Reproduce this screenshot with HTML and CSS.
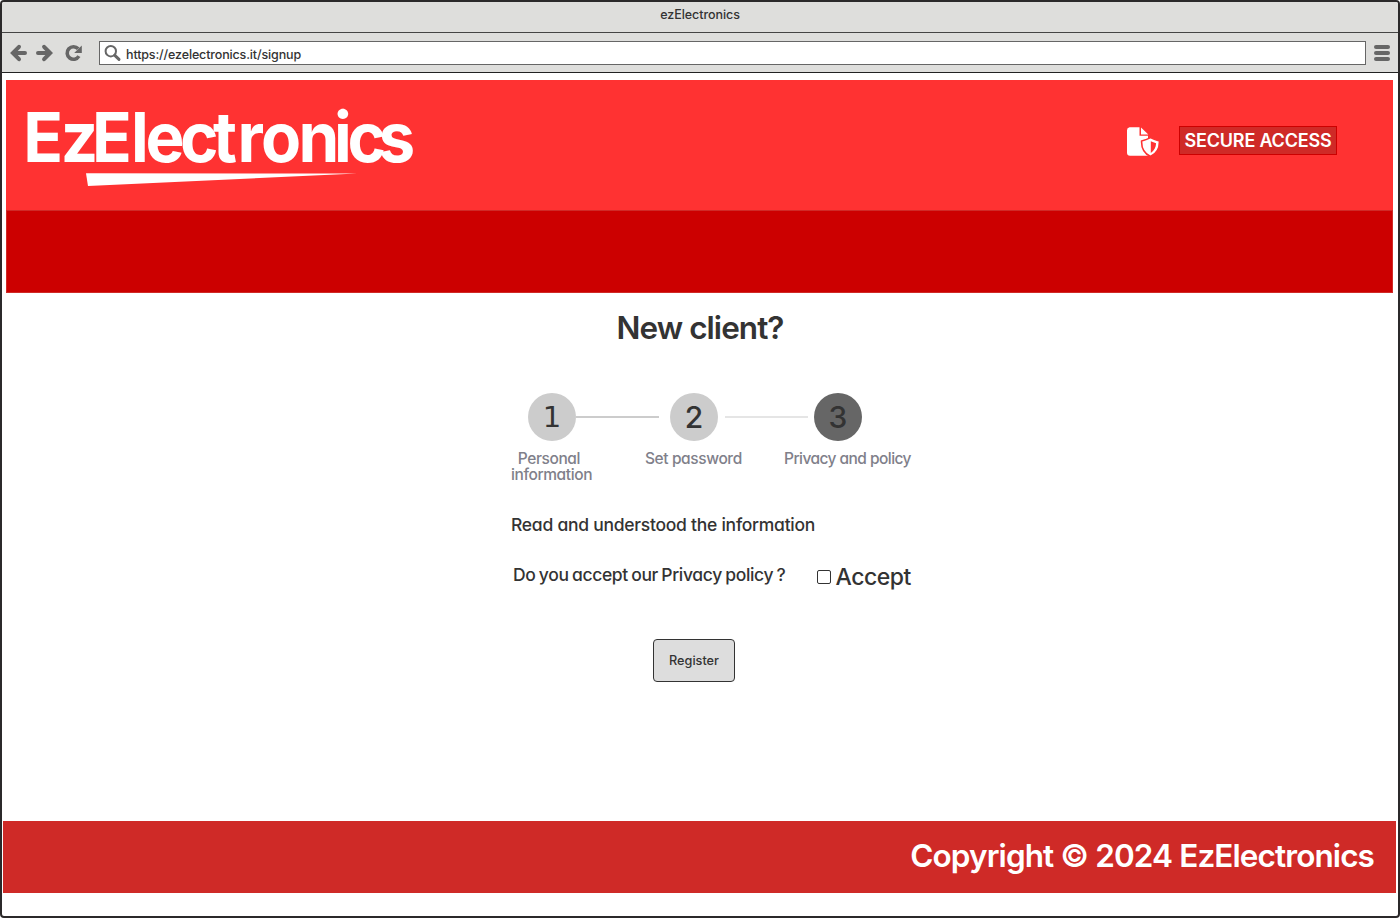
FILE: index.html
```html
<!DOCTYPE html>
<html lang="en">
<head>
<meta charset="utf-8">
<title>ezElectronics</title>
<link rel="stylesheet" href="styles.css">
</head>
<body>
<div class="window">
  <div class="titlebar"><span>ezElectronics</span></div>
  <div class="toolbar">
    <svg class="nav-icons" width="76" height="20" viewBox="0 0 76 20" fill="none" stroke="#666" stroke-width="4">
      <path d="M10 3.800 3.900 10l6.100 6.200M5 10h11" stroke-linecap="round"/>
      <path d="M35.100 3.800 41.200 10l-6.100 6.200M40 10H29" stroke-linecap="round"/>
      <path d="M69.200 5.800A6.300 6.300 0 1 0 69.900 13.200" stroke-width="3.600"/>
      <path d="M72.800 2.500v7.400h-7.600z" fill="#666" stroke="none"/>
    </svg>
    <div class="address">
      <svg width="18" height="18" viewBox="0 0 18 18" fill="none" stroke="#666"><circle cx="6.800" cy="7.200" r="5.200" stroke-width="2"/><path d="m10.800 11.400 4.200 4" stroke-width="3" stroke-linecap="round"/></svg>
      <span>https://ezelectronics.it/signup</span>
    </div>
    <div class="menu"><i></i><i></i><i></i></div>
  </div>
  <header class="header">
    <svg class="logo" width="400" height="90" viewBox="0 0 400 90" fill="#fff">
      <text class="logo-text" transform="scale(.95 1)" y="61.500" x="-2.900 36.500 69.600 110.400 125.900 162 196.900 222.600 247.500 286.800 324.200 338.500 371">EzElectronics</text>
      <path d="M60 73.200 331 73.600 62 86z"/>
    </svg>
    <div class="secure">
      <svg width="34" height="32" viewBox="0 0 34 32">
        <path fill="#fff" d="M3.500 1.300h10v8.500H22V29.800H4a3 3 0 0 1-3-3V4.300a3 3 0 0 1 2.500-3z"/>
        <path fill="#fff" d="M15 1.500 22.300 8.600H15z"/>
        <path fill="#fff" stroke="#ff3232" stroke-width="1.600" d="M24.500 11.600c2.800 1.500 5.500 2.400 8.900 3.400.3 7.500-2.400 12.500-8.900 15.500-6.500-3-9.200-8-8.900-15.500 3.400-1 6.100-1.900 8.900-3.400z"/>
        <path fill="#ff3232" d="M24.800 15.300c1.600.8 3.500 1.500 5.300 2-.2 4.200-1.900 7.300-5.300 9.700z"/>
      </svg>
      <span class="secure-label">SECURE ACCESS</span>
    </div>
  </header>
  <div class="band"></div>
  <main class="main">
    <h1><span>New client?</span></h1>
    <div class="steps">
      <div class="circle first">1</div><div class="line"></div>
      <div class="circle second">2</div><div class="line faint"></div>
      <div class="circle active">3</div>
    </div>
    <div class="labels">
      <div class="personal">&nbsp;Personal<br>information</div>
      <span class="setpw">Set password</span>
      <span class="privacy">Privacy and policy</span>
    </div>
    <p class="read"><span>Read and understood the information</span></p>
    <div class="question">
      <span class="ask">Do you accept our Privacy policy ?</span>
      <label class="accept"><i class="box"></i><span>Accept</span></label>
    </div>
    <button class="register">Register</button>
  </main>
  <footer class="footer"><span>Copyright © 2024 EzElectronics</span></footer>
</div>
</body>
</html>
```
FILE: styles.css
```css
* { box-sizing: border-box; }
body { margin: 0; font-family: Inter, "Liberation Sans", sans-serif; color: #333; font-feature-settings: "cv11"; }
span { white-space: nowrap; }
.window { width: 1400px; height: 918px; border: 2px solid #2b292a; border-radius: 4px; background: #fff; display: flex; flex-direction: column; overflow: hidden; }
.titlebar { height: 31px; flex: none; background: #dededc; border-bottom: 1px solid #444; text-align: center; font-size: 12.500px; font-weight: 500; line-height: 26px; letter-spacing: -0.05px; }
.toolbar { height: 40px; flex: none; background: #dededc; border-bottom: 1px solid #222; display: flex; align-items: center; padding: 0 8px 0 7px; }
.nav-icons { margin-right: 14px; flex: none; }
.address { flex: none; width: 1267px; height: 24px; border: 1px solid #666; background: #fff; display: flex; align-items: center; padding-left: 4px; gap: 4px; font-size: 12.500px; font-weight: 500; letter-spacing: -0.14px; }
.address span { padding-top: 3px; }
.menu { width: 16px; margin-left: 8px; display: flex; flex-direction: column; gap: 2px; margin-top: 1px; }
.menu i { height: 4px; border-radius: 2px; background: #666; }
.header { flex: none; height: 130px; margin: 7px 5px 0 4px; background: #ff3232; display: flex; justify-content: space-between; align-items: flex-start; padding: 20px 56px 0 20px; }
.logo { overflow: visible; }
.logo-text { font-family: Inter, sans-serif; font-weight: 700; font-size: 69px; }
.secure { display: flex; align-items: flex-start; gap: 19px; margin-top: 26px; }
.secure-label { width: 158px; height: 29px; background: #cf2a27; border: 1px solid #c00; color: #fff; text-align: center; font-size: 18px; line-height: 28px; font-weight: 600; letter-spacing: -0.2px; }
.band { flex: none; height: 83px; margin: 0 5px 0 4px; background: #c00; border: 1px solid #cf2a27; }
.main { height: 528px; flex: none; padding-left: 509px; display: flex; flex-direction: column; align-items: flex-start; }
h1 { width: 378px; margin: 15px 0 0; height: 85px; font-size: 31.500px; line-height: 40px; font-weight: 600; letter-spacing: -0.95px; text-align: center; }
.steps { display: flex; align-items: center; padding-left: 17px; height: 48px; }
.circle { width: 48px; height: 48px; border-radius: 50%; background: #ccc; text-align: center; font-size: 30px; line-height: 48px; font-weight: 500; }
.circle.first { font-family: "DejaVu Sans", sans-serif; font-weight: 400; font-size: 29px; line-height: 49px; }
.circle.second { margin-left: 11px; }
.circle.active { margin-left: 6px; background: #666; }
.line { width: 83px; height: 2px; background: #ccc; }
.line.faint { background: #e5e5e5; margin-left: 7px; }
.labels { display: flex; height: 67px; padding-top: 10px; font-size: 15.500px; line-height: 16px; color: #80808a; font-weight: 500; letter-spacing: -0.4px; }
.personal { width: 134px; text-indent: 3px; }
.setpw { width: 139px; }
.privacy { letter-spacing: -0.55px; }
.read { margin: 0; height: 48px; font-size: 17.500px; line-height: 24px; font-weight: 500; padding-top: 5px; letter-spacing: -0.26px; }
.question { display: flex; flex: none; height: 60px; padding-left: 2px; font-size: 17.500px; line-height: 24px; font-weight: 500; }
.ask { width: 304px; padding-top: 7px; letter-spacing: -0.35px; word-spacing: -1px; }
.accept { display: flex; font-size: 23px; line-height: 28px; padding-top: 7px; letter-spacing: -0.5px; }
.box { width: 14px; height: 14px; border: 1.500px solid #333; border-radius: 2px; margin: 7px 4.500px 0 0; }
.register { width: 82px; height: 43px; flex: none; margin: 23px 0 0 142px; border: 1px solid #333; border-radius: 4px; background: #ddd; font: 500 12.700px Inter, sans-serif; color: #333; padding: 0; }
.footer { flex: none; height: 72px; margin: 0 2px 0 1px; background: #cf2a27; color: #fff; text-align: right; padding-right: 22px; font-size: 31.500px; line-height: 70px; font-weight: 600; letter-spacing: -0.9px; }
```
